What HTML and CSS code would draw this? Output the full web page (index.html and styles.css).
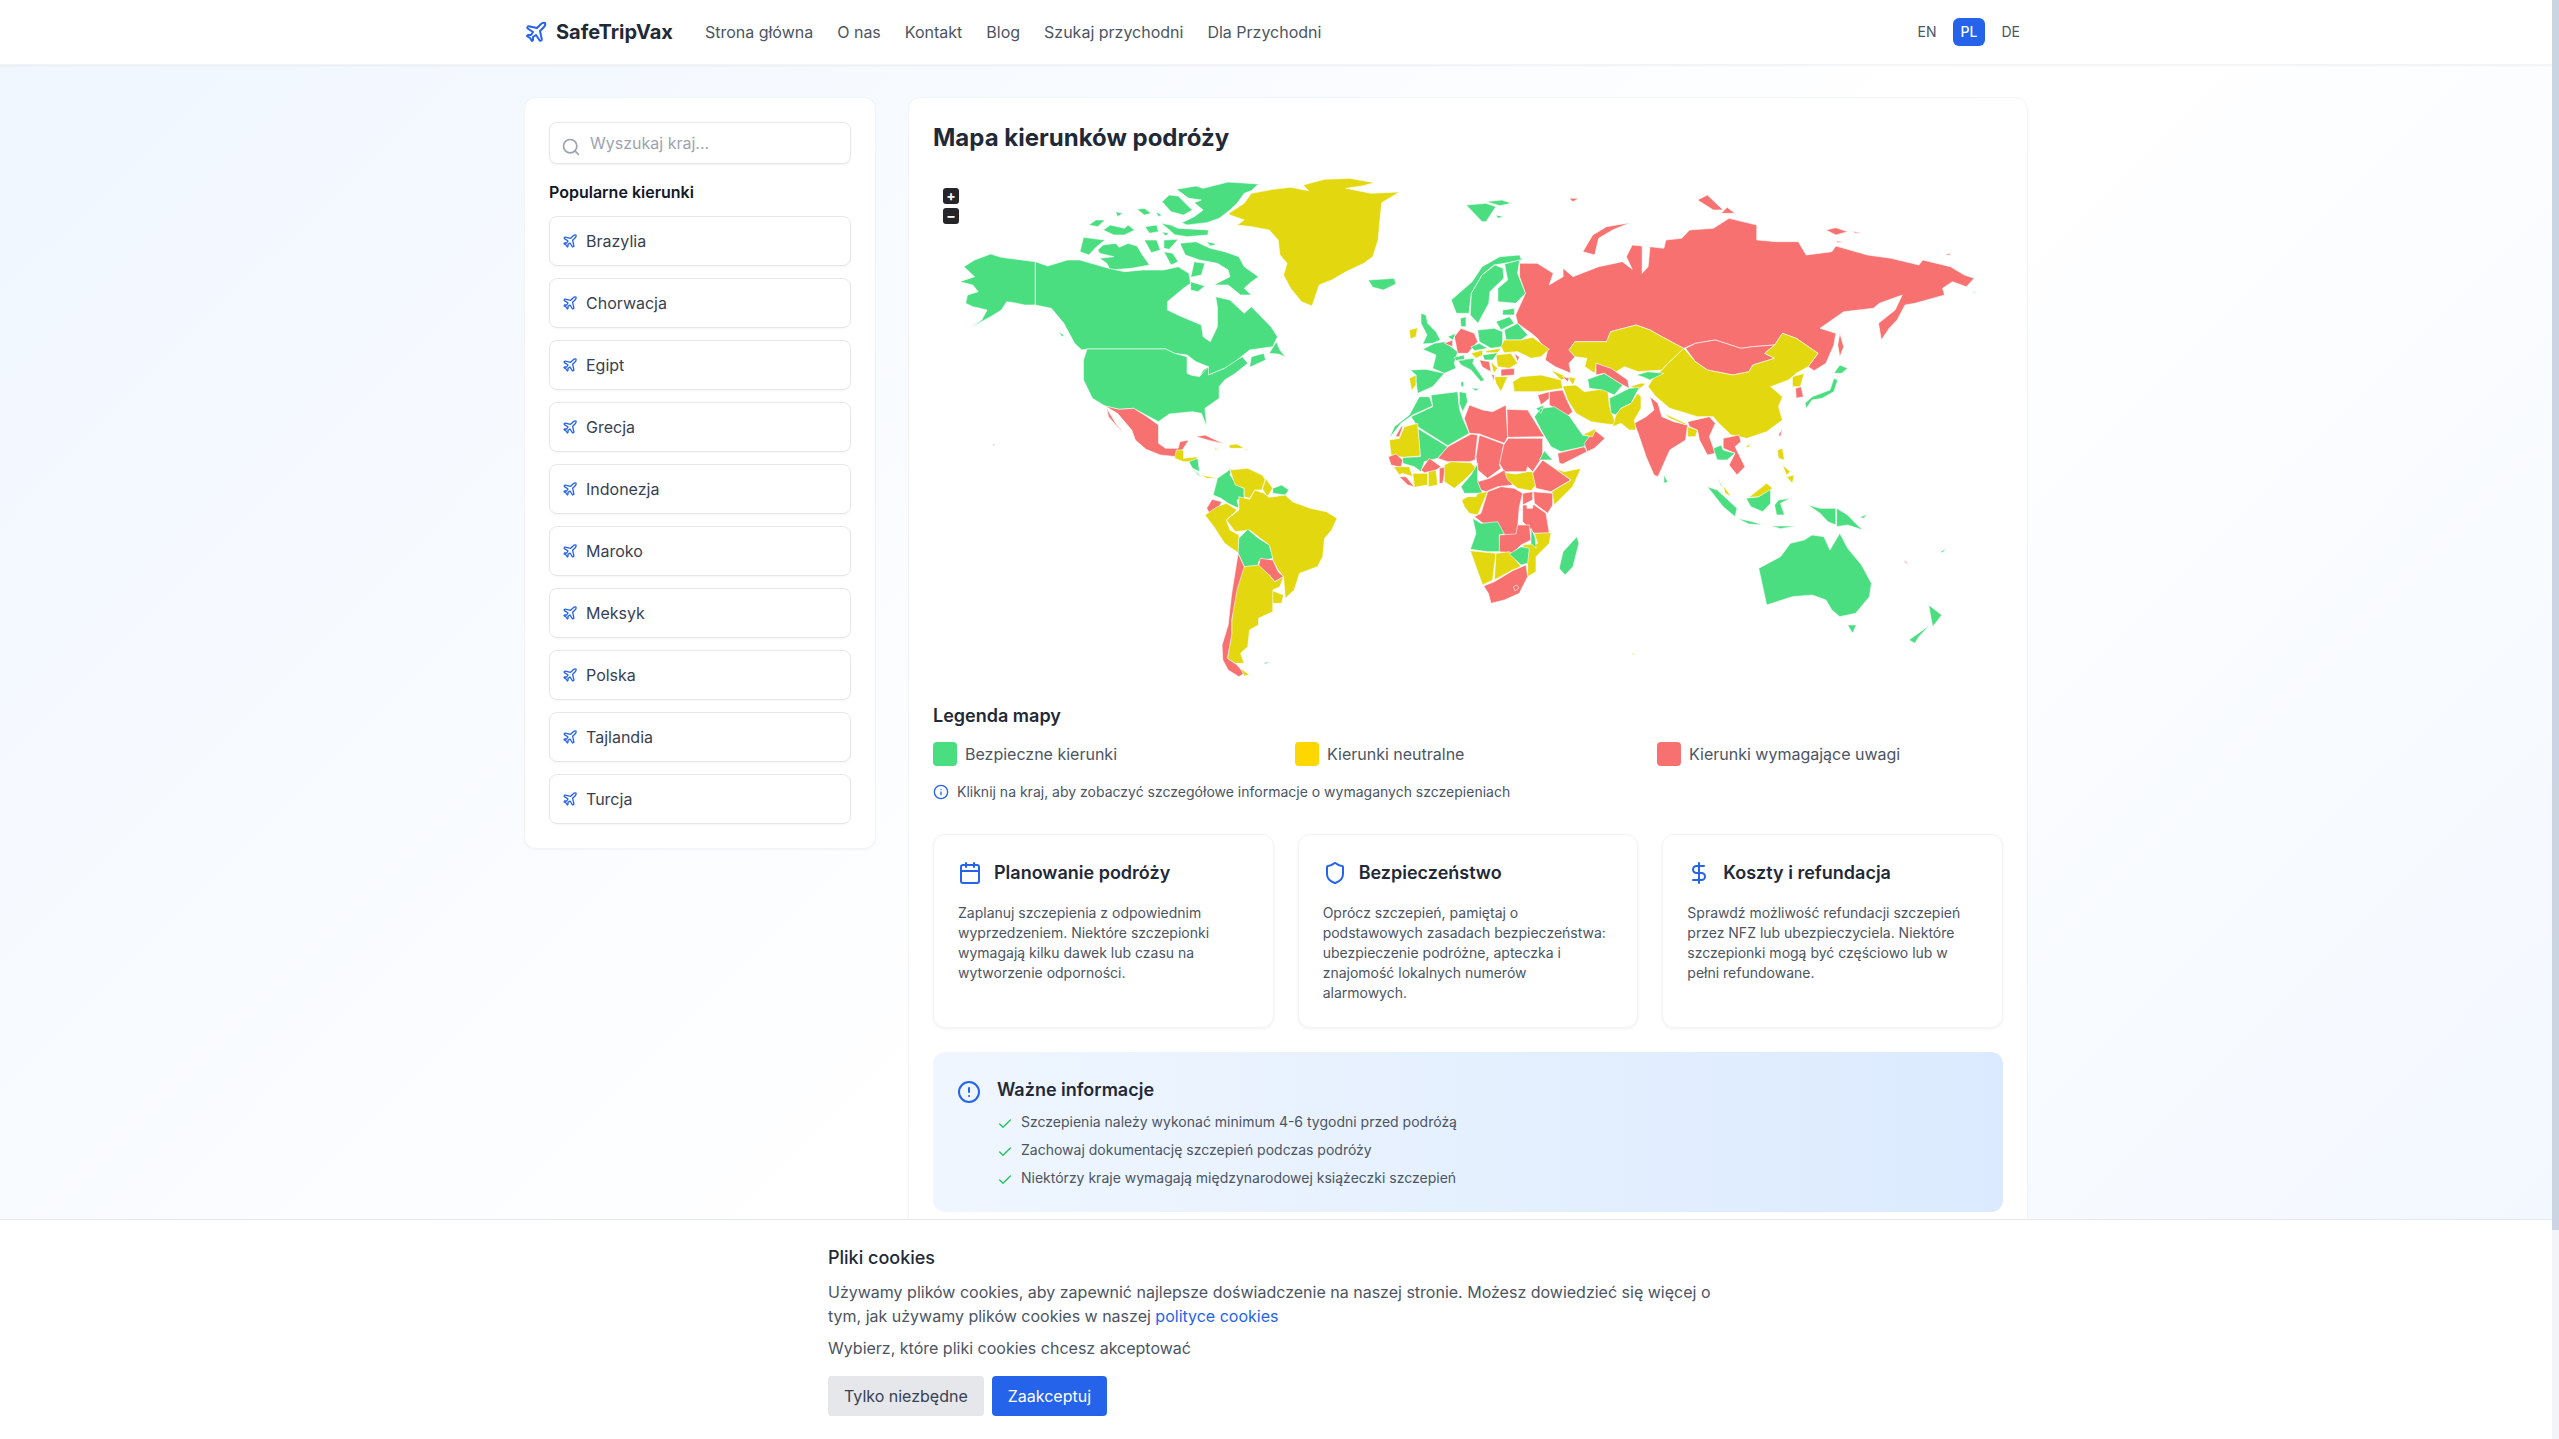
FILE: index.html
```html
<!DOCTYPE html>
<html lang="pl">
  <head>
    <meta charset="UTF-8" />
    <meta name="viewport" content="width=device-width, initial-scale=1.0" />
    <link rel="stylesheet" href="styles.css">
    <title>SafeTripVax</title>
  </head>
  <body>
    <svg class="icon-defs" width="0" height="0">
      <symbol id="plane" viewBox="0 0 24 24"><path d="M17.8 19.2 16 11l3.5-3.5C21 6 21.5 4 21 3c-1-.5-3 0-4.5 1.5L13 8 4.8 6.2c-.5-.1-.9.1-1.1.5l-.3.5c-.2.5-.1 1 .3 1.3L9 12l-2 3H4l-1 1 3 2 2 3 1-1v-3l3-2 3.5 5.3c.3.4.8.5 1.3.3l.5-.2c.4-.3.6-.7.5-1.2z"/></symbol>
      <symbol id="check" viewBox="0 0 24 24"><path d="M20 6 9 17l-5-5"/></symbol>
    </svg>

    <div class="navbar">
      <div class="nav-inner">
        <a href="#" class="logo"><svg class="ico ico-24"><use href="#plane"/></svg>SafeTripVax</a>
        <div class="nav-items">
          <a href="#">Strona główna</a>
          <a href="#">O nas</a>
          <a href="#">Kontakt</a>
          <a href="#">Blog</a>
          <a href="#">Szukaj przychodni</a>
          <a href="#">Dla Przychodni</a>
        </div>
        <div class="langs">
          <a href="#">EN</a>
          <a href="#" class="active">PL</a>
          <a href="#">DE</a>
        </div>
      </div>
    </div>

    <div class="content-wrapper">
      <div class="sidebar card">
        <div class="search">
          <svg class="ico search-icon" viewBox="0 0 24 24"><circle cx="11" cy="11" r="8"/><path d="m21 21-4.3-4.3"/></svg>
          <input type="text" placeholder="Wyszukaj kraj..." />
        </div>
        <div class="popular-title">Popularne kierunki</div>
        <div class="dest-list">
          <a href="#" class="dest"><svg class="ico ico-16"><use href="#plane"/></svg>Brazylia</a>
          <a href="#" class="dest"><svg class="ico ico-16"><use href="#plane"/></svg>Chorwacja</a>
          <a href="#" class="dest"><svg class="ico ico-16"><use href="#plane"/></svg>Egipt</a>
          <a href="#" class="dest"><svg class="ico ico-16"><use href="#plane"/></svg>Grecja</a>
          <a href="#" class="dest"><svg class="ico ico-16"><use href="#plane"/></svg>Indonezja</a>
          <a href="#" class="dest"><svg class="ico ico-16"><use href="#plane"/></svg>Maroko</a>
          <a href="#" class="dest"><svg class="ico ico-16"><use href="#plane"/></svg>Meksyk</a>
          <a href="#" class="dest"><svg class="ico ico-16"><use href="#plane"/></svg>Polska</a>
          <a href="#" class="dest"><svg class="ico ico-16"><use href="#plane"/></svg>Tajlandia</a>
          <a href="#" class="dest"><svg class="ico ico-16"><use href="#plane"/></svg>Turcja</a>
        </div>
      </div>

      <div class="main-section card">
        <h1>Mapa kierunków podróży</h1>

        <div class="map">
          <div class="map-zoom">
            <button>+</button>
            <button>−</button>
          </div>
          <svg class="world" viewBox="932 170 1071 510">
            <!-- americas -->
            <g transform="translate(920 160) scale(.35714 .33333)">
              <path class="neutral" d="M862,160 L905,130 L925,100 L985,88 L1035,82 L1085,92 L1070,75 L1130,58 L1200,55 L1270,68 L1235,78 L1190,85 L1260,100 L1340,96 L1290,128 L1285,180 L1280,240 L1265,290 L1240,310 L1190,335 L1150,360 L1115,375 L1095,438 L1065,425 L1035,385 L1015,345 L1025,310 L1005,285 L1000,240 L975,210 L925,200 L885,195 L905,180 L865,165 Z"/>
              <path class="safe" d="M1252,360 L1285,358 L1325,355 L1330,372 L1295,390 L1265,382 Z"/>
              <path class="safe" d="M715,88 L770,78 L790,85 L860,66 L945,72 L925,92 L905,100 L885,130 L865,150 L835,175 L800,188 L745,195 L730,188 L765,170 L790,150 L765,128 L785,120 L750,115 Z"/>
              <path class="safe" d="M675,125 L695,105 L720,108 L750,140 L760,150 L735,165 L700,155 Z M605,148 L625,145 L645,160 L625,165 Z M658,155 L675,165 L665,170 Z M545,155 L565,160 L550,170 Z M470,195 L490,180 L515,180 L495,200 Z M510,210 L530,195 L570,205 L580,195 L598,210 L570,225 L540,225 Z M627,200 L660,195 L665,215 L640,220 Z M672,190 L700,195 L720,205 L805,210 L803,225 L745,230 L710,224 L690,205 Z M675,215 L695,220 L685,228 Z"/>
              <path class="safe" d="M445,275 L455,232 L515,240 L490,262 L470,285 Z M495,270 L510,255 L545,250 L555,262 L580,250 L605,258 L620,285 L640,315 L590,325 L530,330 L520,310 L500,295 L540,290 L500,280 Z M625,240 L660,240 L670,270 L645,278 Z M680,240 L720,238 L695,268 L680,265 Z M800,245 L830,252 L810,258 Z"/>
              <path class="safe" d="M725,250 L770,245 L810,265 L850,275 L890,290 L905,320 L945,350 L920,370 L905,385 L925,405 L895,405 L860,375 L820,375 L865,350 L860,330 L830,310 L780,300 L740,285 Z M680,275 L705,280 L720,305 L700,315 Z M755,365 L795,378 L775,395 L755,390 Z M765,305 L795,310 L785,345 L755,352 Z"/>
              <path class="safe" d="M120,320 L150,300 L195,282 L225,292 L320,305 L320,435 L290,435 L260,428 L240,425 L225,450 L195,470 L135,505 L170,480 L185,450 L145,440 L125,430 L130,405 L160,395 L145,375 L108,365 L150,350 Z"/>
              <path class="safe" d="M320,305 L355,318 L410,300 L445,300 L525,325 L570,335 L620,330 L680,330 L720,320 L750,340 L755,370 L735,385 L690,425 L690,450 L730,470 L785,495 L790,530 L810,545 L830,500 L830,440 L825,410 L865,420 L905,460 L925,440 L980,500 L998,530 L985,560 L920,570 L885,600 L885,615 L850,625 L805,645 L780,650 L790,630 L805,620 L770,605 L745,585 L710,580 L685,567 L465,567 L450,570 L430,550 L410,510 L400,490 L365,445 L320,435 Z"/>
              <path class="safe" d="M975,580 L995,545 L1005,570 L1020,590 L1000,582 Z M925,590 L960,580 L965,600 L920,622 Z M385,515 L400,525 L395,530 Z M200,852 L208,853 L204,857 Z"/>
              <path class="safe" d="M465,567 L685,567 L710,580 L745,590 L745,640 L755,645 L780,650 L805,620 L805,645 L850,625 L885,600 L900,590 L915,610 L880,640 L850,660 L835,680 L835,715 L795,745 L800,800 L785,760 L760,755 L695,762 L665,785 L630,765 L595,745 L555,748 L515,738 L480,715 L455,660 L455,600 Z"/>
              <path class="risk" d="M515,738 L555,748 L595,745 L630,768 L665,795 L665,850 L685,865 L720,865 L725,845 L750,840 L735,865 L715,890 L670,885 L630,868 L600,840 L590,810 L550,760 Z M520,745 L545,790 L570,822 L545,795 L525,770 Z M770,830 L795,825 L825,840 L850,852 L810,842 Z"/>
              <path class="neutral" d="M715,870 L735,870 L735,895 L775,890 L765,905 L735,905 L710,895 Z M785,945 L830,955 L800,955 Z M862,855 L885,852 L905,865 L865,865 Z M820,865 L835,868 L825,870 Z M905,866 L918,870 L908,871 Z"/>
              <path class="safe" d="M750,905 L775,895 L780,935 L760,925 Z M760,925 L785,950 L775,945 Z"/>
              <path class="safe" d="M830,955 L870,925 L865,945 L885,975 L905,985 L905,1015 L885,1020 L890,1045 L860,1030 L840,1015 L818,1005 Z"/>
              <path class="neutral" d="M865,930 L915,925 L955,945 L965,960 L955,990 L935,990 L920,1015 L905,1010 L905,985 L880,975 Z M965,955 L985,985 L970,1010 L955,985 Z"/>
              <path class="safe" d="M985,985 L1010,975 L1030,990 L1020,1005 L985,1000 Z"/>
              <path class="risk" d="M800,1045 L815,1018 L842,1025 L835,1040 L808,1060 Z"/>
              <path class="neutral" d="M795,1065 L830,1040 L855,1030 L885,1050 L855,1080 L865,1110 L890,1125 L890,1180 L850,1150 L820,1100 Z"/>
              <path class="neutral" d="M890,1010 L920,1018 L935,990 L960,1000 L975,1012 L1020,1005 L1040,1025 L1090,1045 L1135,1055 L1165,1075 L1150,1110 L1130,1135 L1125,1190 L1110,1220 L1060,1240 L1045,1290 L1020,1315 L1015,1250 L1000,1230 L985,1200 L975,1155 L920,1110 L880,1115 L855,1080 L890,1050 Z"/>
              <path class="safe" d="M890,1135 L915,1108 L945,1135 L975,1155 L985,1195 L945,1205 L945,1218 L905,1220 L888,1180 Z"/>
              <path class="risk" d="M945,1220 L950,1195 L985,1200 L1000,1235 L1015,1250 L990,1265 L975,1245 Z"/>
              <path class="neutral" d="M980,1290 L1015,1305 L1010,1330 L985,1330 Z"/>
              <path class="neutral" d="M905,1220 L945,1215 L980,1250 L990,1265 L1015,1250 L1005,1280 L985,1290 L985,1335 L985,1355 L945,1375 L945,1395 L920,1410 L915,1460 L895,1480 L905,1510 L880,1510 L858,1495 L870,1420 L870,1380 L880,1290 L895,1230 Z"/>
              <path class="risk" d="M888,1180 L905,1220 L885,1290 L870,1380 L870,1425 L858,1495 L885,1515 L905,1540 L890,1550 L860,1530 L845,1500 L843,1455 L860,1395 L870,1300 Z"/>
              <path class="neutral" d="M895,1525 L920,1545 L905,1548 Z"/>
              <path class="safe" d="M958,1508 L980,1505 L965,1512 Z"/>
            </g>

            <!-- asia, oceania, scandinavia -->
            <g transform="translate(1400 160) scale(.3953 .33333)">
              <path class="safe" d="M165,135 L215,130 L240,140 L215,185 L205,185 Z M215,125 L255,120 L280,130 L250,137 Z M240,165 L260,170 L245,175 Z"/>
              <path class="safe" d="M127,420 L180,365 L205,320 L250,290 L300,285 L305,300 L262,310 L235,315 L205,345 L178,400 L172,460 L140,460 Z"/>
              <path class="safe" d="M178,400 L205,345 L238,315 L258,325 L260,355 L225,395 L222,430 L195,490 L175,465 Z"/>
              <path class="safe" d="M262,312 L300,300 L295,340 L315,400 L290,430 L245,425 L245,385 L270,360 Z"/>
              <path class="risk" d="M425,115 L450,115 L435,125 Z M460,275 L485,225 L520,200 L580,188 L535,210 L500,235 L490,285 Z M750,120 L775,105 L815,150 L790,150 Z M810,160 L825,142 L845,160 Z M1075,210 L1100,203 L1130,215 L1100,225 Z M1140,213 L1165,220 L1150,220 Z M1100,243 L1120,245 L1105,248 Z M1375,283 L1395,280 L1385,286 Z"/>
              <path class="risk" d="M300,310 L345,310 L385,340 L375,375 L410,350 L410,325 L435,350 L500,320 L560,305 L585,328 L570,290 L585,255 L610,258 L610,340 L625,320 L630,260 L665,265 L670,240 L710,235 L730,210 L790,205 L830,175 L900,195 L900,240 L950,245 L1005,245 L1025,285 L1090,275 L1100,258 L1180,285 L1240,295 L1310,315 L1320,300 L1390,320 L1425,345 L1450,355 L1430,380 L1395,365 L1370,385 L1375,405 L1300,430 L1275,435 L1255,480 L1235,505 L1215,540 L1208,490 L1250,450 L1268,405 L1210,430 L1195,445 L1120,455 L1060,505 L1100,520 L1095,555 L1075,610 L1045,632 L1030,620 L1055,580 L1000,535 L965,520 L945,555 L890,560 L860,565 L795,540 L745,550 L715,565 L660,530 L630,510 L595,495 L530,515 L520,545 L440,545 L425,570 L440,590 L425,610 L430,640 L390,620 L365,600 L370,575 L345,535 L330,520 L295,490 L290,465 L315,400 L300,350 Z"/>
              <path class="risk" d="M1110,520 L1120,560 L1110,590 L1105,555 Z"/>
              <path class="risk" d="M720,565 L745,550 L795,540 L860,565 L890,560 L945,555 L920,580 L945,595 L890,615 L880,635 L840,645 L775,630 L745,605 Z"/>
              <path class="neutral" d="M425,570 L440,545 L520,545 L530,515 L595,495 L630,510 L660,530 L715,565 L685,600 L675,610 L660,630 L600,635 L565,620 L545,635 L495,610 L490,640 L465,620 L470,595 L440,590 Z"/>
              <path class="neutral" d="M715,565 L745,605 L775,630 L840,645 L880,635 L890,615 L945,595 L920,580 L945,555 L965,520 L1000,535 L1055,580 L1030,620 L1000,640 L980,660 L935,680 L965,710 L955,740 L965,780 L925,815 L875,835 L835,825 L800,785 L790,770 L750,770 L680,745 L645,710 L625,680 L640,650 L660,630 L675,610 L685,600 Z"/>
              <path class="neutral" d="M990,650 L1020,640 L1010,680 L990,680 Z M870,862 L885,850 L880,862 Z M952,870 L965,865 L970,900 L955,895 Z M965,915 L985,935 L975,945 Z M975,950 L995,945 L990,970 Z M585,1480 L593,1482 L585,1485 Z"/>
              <path class="risk" d="M998,685 L1012,680 L1018,710 L1000,715 Z M955,825 L965,805 L960,830 Z M1272,1200 L1285,1213 L1275,1208 Z"/>
              <path class="safe" d="M1095,640 L1110,615 L1130,625 L1115,640 Z M1095,655 L1105,660 L1095,695 L1065,715 L1040,720 L1025,745 L1022,730 L1040,710 L1085,690 Z"/>
              <path class="safe" d="M595,645 L625,635 L665,640 L630,660 L610,650 Z"/>
              <path class="neutral" d="M580,680 L605,670 L620,670 L600,690 Z"/>
              <path class="risk" d="M630,710 L650,730 L660,770 L690,785 L725,795 L720,840 L680,870 L650,950 L640,945 L620,890 L600,820 L590,790 L620,770 L640,750 Z"/>
              <path class="neutral" d="M665,760 L720,790 L720,795 L680,775 Z M725,800 L750,810 L745,830 L725,830 Z"/>
              <path class="risk" d="M725,785 L780,770 L795,790 L780,830 L795,880 L775,885 L755,840 L750,810 L730,800 Z M815,835 L855,825 L860,845 L845,860 L870,920 L850,945 L830,915 L845,880 L815,865 Z"/>
              <path class="safe" d="M790,865 L810,855 L815,870 L845,880 L825,900 L800,900 Z M800,950 L815,985 L808,975 Z"/>
              <path class="neutral" d="M815,975 L835,1010 L820,1000 Z"/>
              <path class="safe" d="M775,980 L800,990 L850,1045 L845,1070 L815,1040 Z M850,1075 L890,1085 L915,1095 L880,1092 Z M873,1015 L905,1010 L935,985 L935,1030 L915,1055 L885,1040 Z M945,1035 L955,1020 L985,1015 L960,1030 L970,1065 L950,1065 Z M1030,1035 L1060,1045 L1100,1045 L1100,1095 L1080,1085 L1060,1060 Z M1102,1045 L1130,1065 L1150,1090 L1168,1110 L1130,1095 L1102,1100 Z M1160,1072 L1180,1062 L1170,1075 Z M935,1098 L1000,1098 L960,1106 Z"/>
              <path class="neutral" d="M880,1012 L925,970 L940,985 L905,1010 Z"/>
              <path class="safe" d="M665,945 L675,965 L665,970 Z M445,1130 L450,1150 L435,1220 L415,1245 L400,1225 L410,1175 Z"/>
              <path class="safe" d="M905,1225 L960,1190 L985,1150 L1020,1140 L1040,1125 L1070,1130 L1085,1170 L1110,1120 L1130,1165 L1165,1215 L1190,1270 L1185,1310 L1150,1360 L1110,1370 L1090,1350 L1075,1320 L1040,1305 L990,1310 L925,1335 L915,1280 Z"/>
              <path class="safe" d="M1130,1395 L1152,1395 L1142,1420 Z M1335,1335 L1368,1365 L1345,1400 L1340,1370 Z M1338,1395 L1310,1430 L1300,1450 L1285,1440 Z M1365,1175 L1380,1165 L1370,1178 Z M1445,393 L1458,398 L1450,398 Z"/>
            </g>

            <!-- europe, middle east, north africa -->
            <g transform="translate(1300 280) scale(.33333)">
              <path class="neutral" d="M325,150 L350,143 L345,170 L328,177 Z"/>
              <path class="safe" d="M360,100 L375,105 L380,130 L405,155 L418,180 L395,190 L365,192 L378,165 L360,130 Z"/>
              <path class="safe" d="M365,208 L400,190 L430,185 L470,215 L460,250 L465,265 L430,280 L395,265 L405,225 Z"/>
              <path class="safe" d="M328,270 L375,268 L430,280 L395,320 L350,340 L345,305 L345,285 Z"/>
              <path class="neutral" d="M325,295 L345,285 L345,315 L332,332 Z"/>
              <path class="safe" d="M478,115 L495,110 L495,140 L480,140 Z M605,90 L640,85 L640,105 L605,105 Z M585,125 L625,110 L640,130 L600,150 Z M610,150 L650,130 L680,165 L660,180 L615,180 Z M530,150 L580,145 L605,155 L605,200 L570,205 L535,185 Z"/>
              <path class="risk" d="M460,170 L480,145 L520,160 L530,185 L500,220 L470,220 Z M430,190 L455,180 L455,200 Z"/>
              <path class="safe" d="M440,170 L465,160 L455,180 Z M510,200 L535,190 L560,205 L520,212 Z M545,225 L590,218 L575,240 L550,240 Z M470,240 L520,235 L515,250 L550,300 L540,305 L510,270 L480,255 Z M460,232 L490,225 L490,240 L465,242 Z M510,325 L535,325 L525,333 Z M480,305 L488,305 L488,320 L480,320 Z M540,255 L560,260 L565,275 Z"/>
              <path class="neutral" d="M510,220 L545,210 L545,225 L525,235 Z M555,212 L600,205 L590,218 L555,218 Z M600,200 L610,180 L660,180 L695,172 L745,208 L720,230 L690,235 L650,215 L610,218 Z M585,225 L630,220 L650,250 L625,265 L590,260 Z M580,290 L620,290 L600,335 L585,310 Z M570,245 L590,265 L578,280 Z"/>
              <path class="risk" d="M640,220 L655,232 L650,245 Z M535,240 L565,245 L570,275 L545,262 Z M600,268 L640,265 L640,285 L600,288 Z M572,283 L580,285 L578,305 Z"/>
              <path class="neutral" d="M635,305 L660,290 L720,285 L780,300 L785,325 L720,335 L640,335 Z M750,270 L785,285 L800,295 L780,300 Z M800,290 L825,295 L815,315 Z"/>
              <path class="risk" d="M785,290 L805,295 L800,305 Z"/>
              <path class="neutral" d="M785,318 L825,315 L850,335 L920,325 L925,375 L945,435 L900,430 L870,425 L825,400 L800,360 Z"/>
              <path class="risk" d="M745,335 L785,330 L800,365 L815,395 L800,408 L745,375 Z M710,345 L745,335 L745,355 L720,375 Z"/>
              <path class="safe" d="M720,385 L760,380 L805,408 L820,430 L845,465 L875,470 L850,500 L780,515 L750,500 L720,450 L700,410 Z M705,385 L730,375 L720,400 Z"/>
              <path class="risk" d="M770,520 L850,500 L858,515 L785,552 L775,550 Z M850,490 L880,450 L912,475 L880,505 L858,515 Z"/>
              <path class="neutral" d="M845,465 L885,445 L875,470 Z"/>
              <path class="safe" d="M860,298 L910,280 L965,315 L940,345 L905,330 L865,325 Z"/>
              <path class="risk" d="M885,250 L930,265 L980,300 L985,325 L960,312 L910,280 L885,285 Z"/>
              <path class="safe" d="M925,355 L985,325 L1015,322 L990,370 L960,385 L945,405 L930,400 Z"/>
              <path class="neutral" d="M935,440 L945,405 L960,385 L990,370 L1010,340 L1020,350 L1020,385 L1000,420 L1005,450 L985,450 L960,430 Z"/>

              <path class="safe" d="M325,405 L355,350 L385,350 L395,378 L335,405 L300,430 L265,475 L280,440 Z"/>
              <path class="safe" d="M390,345 L470,335 L475,385 L485,415 L505,460 L440,497 L350,440 L330,410 L395,380 Z"/>
              <path class="safe" d="M475,335 L495,338 L500,365 L485,395 L475,370 Z"/>
              <path class="risk" d="M490,415 L505,375 L545,390 L575,395 L615,375 L620,470 L610,490 L535,462 L505,460 Z"/>
              <path class="risk" d="M618,388 L680,390 L730,470 L620,472 Z"/>
              <path class="risk" d="M622,475 L725,475 L725,530 L695,575 L680,560 L675,575 L610,575 L595,550 L608,495 Z"/>
              <path class="risk" d="M535,465 L608,492 L595,555 L600,565 L560,595 L530,570 L525,530 Z"/>
              <path class="risk" d="M510,462 L530,465 L522,540 L505,545 L440,545 L410,535 L440,500 Z"/>
              <path class="safe" d="M350,445 L440,500 L410,535 L370,545 L360,575 L340,560 L305,550 L305,532 L358,530 Z"/>
              <path class="neutral" d="M265,480 L295,475 L310,440 L350,430 L358,528 L305,532 L270,525 Z"/>
              <path class="risk" d="M283,470 L300,440 L330,430 L305,440 L295,470 Z"/>
              <path class="risk" d="M262,530 L285,522 L305,540 L300,562 L270,555 Z"/>
              <path class="neutral" d="M278,560 L325,560 L335,590 L305,580 L295,585 Z"/>
              <path class="risk" d="M295,590 L315,590 L340,620 L320,615 Z"/>
              <path class="neutral" d="M335,580 L380,580 L380,615 L340,622 Z"/>
              <path class="neutral" d="M382,572 L405,570 L410,615 L382,620 Z"/>
              <path class="risk" d="M360,570 L385,535 L420,560 L405,570 L370,578 Z"/>
              <path class="risk" d="M415,565 L435,560 L425,610 L415,610 Z"/>
              <path class="neutral" d="M430,555 L450,545 L510,548 L525,565 L490,600 L460,625 L430,605 Z"/>
              <path class="safe" d="M480,620 L510,585 L530,550 L530,600 L545,640 L490,640 Z"/>
              <path class="neutral" d="M482,660 L500,650 L525,650 L530,640 L560,635 L545,670 L530,705 L505,700 L490,680 Z"/>
              <path class="risk" d="M530,605 L565,595 L610,570 L635,615 L590,620 L555,635 L540,630 Z"/>
              <path class="neutral" d="M612,578 L645,582 L680,575 L695,575 L705,615 L690,632 L650,625 L620,600 Z"/>
              <path class="risk" d="M695,580 L725,540 L760,565 L810,600 L750,635 L705,625 Z"/>
              <path class="safe" d="M715,540 L730,512 L755,540 Z"/>
              <path class="neutral" d="M762,565 L790,575 L840,565 L815,620 L760,675 L752,635 L810,600 Z"/>
              <path class="risk" d="M540,700 L560,635 L600,620 L640,625 L665,640 L655,680 L650,740 L650,775 L590,760 L560,740 L520,710 Z"/>
              <path class="risk" d="M695,635 L755,640 L755,675 L740,700 L700,670 L698,640 Z"/>
              <path class="risk" d="M665,675 L700,675 L735,700 L745,760 L700,760 L665,725 Z"/>
              <path class="risk" d="M665,640 L695,635 L695,660 L665,675 Z"/>
              <path class="lake" d="M678,670 L695,662 L695,685 L678,685 Z"/>
            </g>

            <!-- southern africa -->
            <g transform="translate(1380 380) scale(.33333)">
              <path class="safe" d="M275,415 L300,430 L350,425 L370,462 L355,465 L358,515 L320,515 L268,508 L285,460 Z"/>
              <path class="risk" d="M355,465 L405,462 L410,435 L445,435 L450,480 L420,495 L395,520 L355,515 Z"/>
              <path class="neutral" d="M268,512 L345,520 L335,600 L305,615 L285,560 Z"/>
              <path class="neutral" d="M345,520 L385,515 L420,560 L395,570 L340,600 Z"/>
              <path class="neutral" d="M425,495 L470,490 L460,460 L510,458 L505,490 L465,530 L465,575 L440,590 L440,555 Z"/>
              <path class="safe" d="M385,522 L420,500 L445,505 L440,550 L420,555 Z"/>
              <path class="safe" d="M450,445 L462,470 L465,505 L450,490 Z"/>
              <path class="risk" d="M308,618 L340,605 L395,572 L435,555 L440,590 L415,640 L370,660 L330,670 L322,640 Z"/>
              <path class="risk" d="M397,620 L408,615 L414,624 L402,633 Z"/>
            </g>
          </svg>
        </div>

        <div class="legend">
          <h3>Legenda mapy</h3>
          <div class="legend-row">
            <div class="legend-item"><span class="swatch swatch-safe"></span>Bezpieczne kierunki</div>
            <div class="legend-item"><span class="swatch swatch-neutral"></span>Kierunki neutralne</div>
            <div class="legend-item"><span class="swatch swatch-risk"></span>Kierunki wymagające uwagi</div>
          </div>
          <div class="map-hint">
            <svg class="ico hint-icon" viewBox="0 0 24 24"><circle cx="12" cy="12" r="10"/><path d="M12 16v-4"/><path d="M12 8h.01"/></svg>
            Kliknij na kraj, aby zobaczyć szczegółowe informacje o wymaganych szczepieniach
          </div>
        </div>

        <div class="tips">
          <div class="tip">
            <h3><svg class="ico ico-24" viewBox="0 0 24 24"><path d="M8 2v4"/><path d="M16 2v4"/><rect x="3" y="4" width="18" height="18" rx="2"/><path d="M3 10h18"/></svg>Planowanie podróży</h3>
            <p>Zaplanuj szczepienia z odpowiednim wyprzedzeniem. Niektóre szczepionki wymagają kilku dawek lub czasu na wytworzenie odporności.</p>
          </div>
          <div class="tip">
            <h3><svg class="ico ico-24" viewBox="0 0 24 24"><path d="M20 13c0 5-3.5 7.5-7.66 8.95a1 1 0 0 1-.67-.01C7.5 20.5 4 18 4 13V6a1 1 0 0 1 1-1c2 0 4.5-1.2 6.24-2.72a1.17 1.17 0 0 1 1.52 0C14.51 3.81 17 5 19 5a1 1 0 0 1 1 1z"/></svg>Bezpieczeństwo</h3>
            <p>Oprócz szczepień, pamiętaj o podstawowych zasadach bezpieczeństwa: ubezpieczenie podróżne, apteczka i znajomość lokalnych numerów alarmowych.</p>
          </div>
          <div class="tip">
            <h3><svg class="ico ico-24" viewBox="0 0 24 24"><path d="M12 2v20"/><path d="M17 5H9.5a3.5 3.5 0 0 0 0 7h5a3.5 3.5 0 0 1 0 7H6"/></svg>Koszty i refundacja</h3>
            <p>Sprawdź możliwość refundacji szczepień przez NFZ lub ubezpieczyciela. Niektóre szczepionki mogą być częściowo lub w pełni refundowane.</p>
          </div>
        </div>

        <div class="notice">
          <svg class="ico notice-icon" viewBox="0 0 24 24"><circle cx="12" cy="12" r="10"/><path d="M12 8v4"/><path d="M12 16h.01"/></svg>
          <div>
            <h3>Ważne informacje</h3>
            <ul>
              <li><svg class="ico check-icon"><use href="#check"/></svg>Szczepienia należy wykonać minimum 4-6 tygodni przed podróżą</li>
              <li><svg class="ico check-icon"><use href="#check"/></svg>Zachowaj dokumentację szczepień podczas podróży</li>
              <li><svg class="ico check-icon"><use href="#check"/></svg>Niektórzy kraje wymagają międzynarodowej książeczki szczepień</li>
            </ul>
          </div>
        </div>
      </div>
    </div>

    <div class="cookie-banner">
      <div class="cookie-inner">
        <div class="cookie-title">Pliki cookies</div>
        <p>Używamy plików cookies, aby zapewnić najlepsze doświadczenie na naszej stronie. Możesz dowiedzieć się więcej o tym, jak używamy plików cookies w naszej <a href="#">polityce cookies</a></p>
        <p class="cookie-choice">Wybierz, które pliki cookies chcesz akceptować</p>
        <div class="cookie-buttons">
          <button class="btn-gray">Tylko niezbędne</button>
          <button class="btn-blue">Zaakceptuj</button>
        </div>
      </div>
    </div>

    <div class="scroll-track"><div class="scroll-thumb"></div></div>
  </body>
</html>
```

FILE: styles.css
```css
html::-webkit-scrollbar {
  display: none;
}

body {
  margin: 0 7px 0 0;
  font-family: "Inter", "Liberation Sans", sans-serif;
  font-size: 16px;
  line-height: 24px;
  color: #111827;
  background: linear-gradient(135deg, #eff6ff 0%, #ffffff 50%, #eff6ff 100%);
}

a {
  text-decoration: none;
  color: inherit;
}

h1,
h3,
p,
ul {
  margin: 0;
  padding: 0;
}

.icon-defs {
  position: absolute;
}

.scroll-track {
  position: fixed;
  top: 0;
  right: 0;
  bottom: 0;
  width: 7px;
  background-color: #f3f4f8;
}

.scroll-thumb {
  height: 1230px;
  background-color: #cbd5e1;
}

.ico {
  fill: none;
  stroke: #2563eb;
  stroke-width: 2;
  stroke-linecap: round;
  stroke-linejoin: round;
  flex-shrink: 0;
}

.ico-24 {
  width: 24px;
  height: 24px;
}

.ico-16 {
  width: 16px;
  height: 16px;
}

.navbar {
  height: 64px;
  background-color: white;
  border-bottom: 1px solid #f3f4f6;
  box-shadow: 0 1px 2px rgba(0, 0, 0, 0.05);
}

.nav-inner {
  width: 1504px;
  height: 64px;
  margin: 0 auto;
  display: flex;
  align-items: center;
}

.logo {
  display: flex;
  align-items: center;
  gap: 8px;
  font-size: 20px;
  font-weight: 700;
  color: #1f2937;
}

.nav-items {
  display: flex;
  gap: 24px;
  margin-left: 32px;
  color: #4b5563;
}

.langs {
  display: flex;
  gap: 8px;
  margin-left: auto;
  font-size: 14px;
  line-height: 20px;
  color: #4b5563;
}

.langs a {
  padding: 4px 8px;
  border-radius: 6px;
}

.langs .active {
  background-color: #2563eb;
  color: white;
  font-weight: 500;
}

.content-wrapper {
  width: 1504px;
  margin: 0 auto;
  padding: 32px 0;
  display: grid;
  grid-template-columns: 352px 1120px;
  gap: 32px;
  align-items: start;
}

.card {
  background-color: white;
  border: 1px solid #f3f4f6;
  border-radius: 12px;
  box-shadow: 0 1px 2px rgba(0, 0, 0, 0.04);
  padding: 24px;
}

.search {
  position: relative;
  margin-bottom: 16px;
}

.search input {
  display: block;
  box-sizing: border-box;
  width: 100%;
  height: 42px;
  padding: 0 16px 0 40px;
  font-family: inherit;
  font-size: 16px;
  border: 1px solid #e5e7eb;
  border-radius: 8px;
  box-shadow: 0 1px 2px rgba(0, 0, 0, 0.06);
  background-color: white;
}

.search input::placeholder {
  color: #9ca3af;
}

.search-icon {
  position: absolute;
  left: 12px;
  top: 15px;
  width: 20px;
  height: 20px;
  stroke: #9ca3af;
}

.popular-title {
  font-weight: 600;
  margin-bottom: 12px;
}

.dest-list {
  display: flex;
  flex-direction: column;
  gap: 12px;
}

.dest {
  display: flex;
  align-items: center;
  gap: 8px;
  height: 50px;
  box-sizing: border-box;
  padding: 0 12px;
  border: 1px solid #e5e7eb;
  border-radius: 8px;
  box-shadow: 0 1px 2px rgba(0, 0, 0, 0.04);
  color: #374151;
}

.main-section {
  box-sizing: border-box;
  min-height: 1557px;
}

.main-section h1 {
  font-size: 24px;
  line-height: 32px;
  font-weight: 700;
  color: #1f2937;
}

.map {
  position: relative;
  height: 510px;
  margin-top: 16px;
}

.world {
  display: block;
  width: 1071px;
  height: 510px;
}

.world path {
  stroke: white;
  stroke-width: 0.6;
  stroke-linejoin: round;
  vector-effect: non-scaling-stroke;
}

.safe {
  fill: #4ade80;
}

.neutral {
  fill: #e3d70f;
}

.risk {
  fill: #f87171;
}

.lake {
  fill: white;
}

.map-zoom {
  position: absolute;
  left: 10px;
  top: 18px;
  display: flex;
  flex-direction: column;
  gap: 4px;
}

.map-zoom button {
  width: 16px;
  height: 16px;
  padding: 0;
  border: none;
  border-radius: 3px;
  background-color: #26262a;
  color: white;
  font-family: inherit;
  font-size: 14px;
  font-weight: 700;
  line-height: 16px;
}

.legend {
  margin-top: 22px;
}

.legend h3,
.tip h3,
.notice h3 {
  font-size: 18px;
  line-height: 28px;
  font-weight: 600;
  color: #1f2937;
}

.legend-row {
  display: grid;
  grid-template-columns: repeat(3, 1fr);
  gap: 16px;
  margin-top: 12px;
}

.legend-item {
  display: flex;
  align-items: center;
  gap: 8px;
  color: #4b5563;
}

.swatch {
  width: 24px;
  height: 24px;
  border-radius: 4px;
}

.swatch-safe {
  background-color: #4ade80;
}

.swatch-neutral {
  background-color: #ffd700;
}

.swatch-risk {
  background-color: #f87171;
}

.map-hint {
  display: flex;
  align-items: center;
  gap: 8px;
  margin-top: 16px;
  font-size: 14px;
  line-height: 20px;
  color: #4b5563;
}

.hint-icon {
  width: 16px;
  height: 16px;
}

.tips {
  display: grid;
  grid-template-columns: repeat(3, 1fr);
  gap: 24px;
  margin-top: 32px;
}

.tip {
  padding: 24px;
  border: 1px solid #f3f4f6;
  border-radius: 12px;
  box-shadow: 0 1px 3px rgba(0, 0, 0, 0.06);
  background-color: white;
}

.tip h3 {
  display: flex;
  align-items: center;
  gap: 12px;
  margin-bottom: 16px;
}

.tip p {
  font-size: 14px;
  line-height: 20px;
  color: #4b5563;
}

.notice {
  display: flex;
  gap: 16px;
  margin-top: 24px;
  padding: 24px;
  border-radius: 12px;
  background: linear-gradient(to right, #eff6ff, #dbeafe);
}

.notice-icon {
  width: 24px;
  height: 24px;
  margin-top: 4px;
}

.notice ul {
  list-style: none;
}

.notice li {
  display: flex;
  align-items: center;
  gap: 8px;
  margin-top: 8px;
  font-size: 14px;
  line-height: 20px;
  color: #4b5563;
}

.check-icon {
  width: 16px;
  height: 16px;
  margin-top: 3px;
  stroke: #22c55e;
}

.cookie-banner {
  position: fixed;
  left: 0;
  right: 7px;
  bottom: 0;
  height: 220px;
  box-sizing: border-box;
  background-color: white;
  border-top: 1px solid #e5e7eb;
}

.cookie-inner {
  width: 896px;
  margin: 0 auto;
  padding-top: 24px;
  color: #4b5563;
}

.cookie-title {
  font-size: 18px;
  line-height: 28px;
  font-weight: 500;
  color: #1f2937;
  margin-bottom: 8px;
}

.cookie-inner a {
  color: #2563eb;
}

.cookie-choice {
  margin-top: 8px;
}

.cookie-buttons {
  display: flex;
  gap: 8px;
  margin-top: 16px;
}

.cookie-buttons button {
  height: 40px;
  padding: 0 16px;
  border: none;
  border-radius: 4px;
  font-family: inherit;
  font-size: 16px;
  font-weight: 400;
}

.btn-gray {
  background-color: #e5e7eb;
  color: #374151;
}

.btn-blue {
  background-color: #2563eb;
  color: white;
}
```
